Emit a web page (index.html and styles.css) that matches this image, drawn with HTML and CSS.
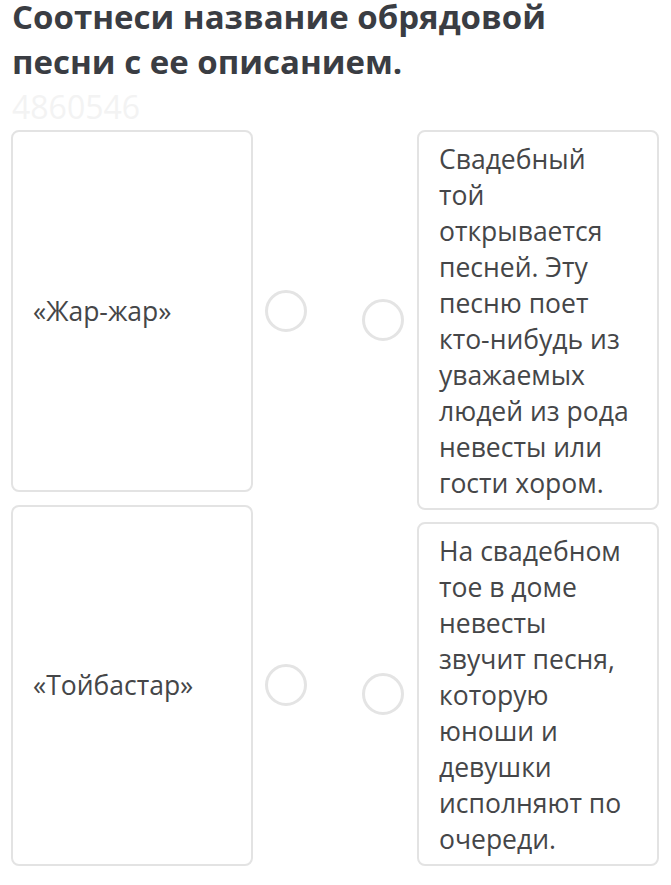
FILE: index.html
```html
<!DOCTYPE html>
<html lang="ru">
  <head>
    <meta charset="UTF-8" />
    <meta name="viewport" content="width=device-width, initial-scale=1.0" />
    <title>Соотнеси</title>
    <link rel="stylesheet" href="styles.css">
  </head>
  <body>
    <main class="quiz">
      <h1 class="title">Соотнеси название обрядовой песни с ее описанием.</h1>
      <div class="qid">4860546</div>
      <div class="match">
        <div class="col col-left">
          <div class="pair">
            <div class="card card-term">«Жар-жар»</div>
            <span class="dot dot-left"></span>
          </div>
          <div class="pair">
            <div class="card card-term">«Тойбастар»</div>
            <span class="dot dot-left"></span>
          </div>
        </div>
        <div class="col col-right">
          <div class="pair">
            <span class="dot dot-right"></span>
            <div class="card card-desc">Свадебный той открывается песней. Эту песню поет кто-нибудь из уважаемых людей из рода невесты или гости хором.</div>
          </div>
          <div class="pair">
            <span class="dot dot-right"></span>
            <div class="card card-desc">На свадебном тое в доме невесты звучит песня, которую юноши и девушки исполняют по очереди.</div>
          </div>
        </div>
      </div>
    </main>
  </body>
</html>
```

FILE: styles.css
```css
html {
  font-size: 16px;
}
body {
  margin: 0;
  background-color: #fff;
  font-family: "Open Sans", "Noto Sans", sans-serif;
  color: #3f4144;
}
.quiz {
  width: 671px;
  box-sizing: border-box;
  padding: 0 12px 0 11px;
}
.title {
  max-width: 590px;
  margin: -6px 0 0;
  padding-left: 1px;
  font-size: 33px;
  line-height: 45px;
  font-weight: 700;
  color: #3a3d43;
}
.qid {
  padding-left: 1px;
  font-size: 32px;
  line-height: 46px;
  color: #f3f3f3;
}
.match {
  display: flex;
  gap: 55px;
}
.col {
  display: flex;
  flex-direction: column;
}
.col-left {
  gap: 13px;
}
.col-left .pair {
  flex: 1;
}
.col-right {
  gap: 12px;
}
.pair {
  display: flex;
  align-items: center;
}
.card {
  box-sizing: border-box;
  width: 242px;
  border: 2px solid #e3e3e3;
  border-radius: 8px;
  font-size: 26.5px;
  line-height: 36px;
  color: #454648;
}
.card-term {
  align-self: stretch;
  display: flex;
  align-items: center;
  padding: 0 20px;
}
.card-desc {
  padding: 9px 23px 7px 20px;
}
.dot {
  box-sizing: border-box;
  width: 42px;
  height: 42px;
  border: 3px solid #e4e4e4;
  border-radius: 50%;
}
.dot-left {
  margin-left: 12px;
}
.dot-right {
  margin-right: 13px;
}
```
